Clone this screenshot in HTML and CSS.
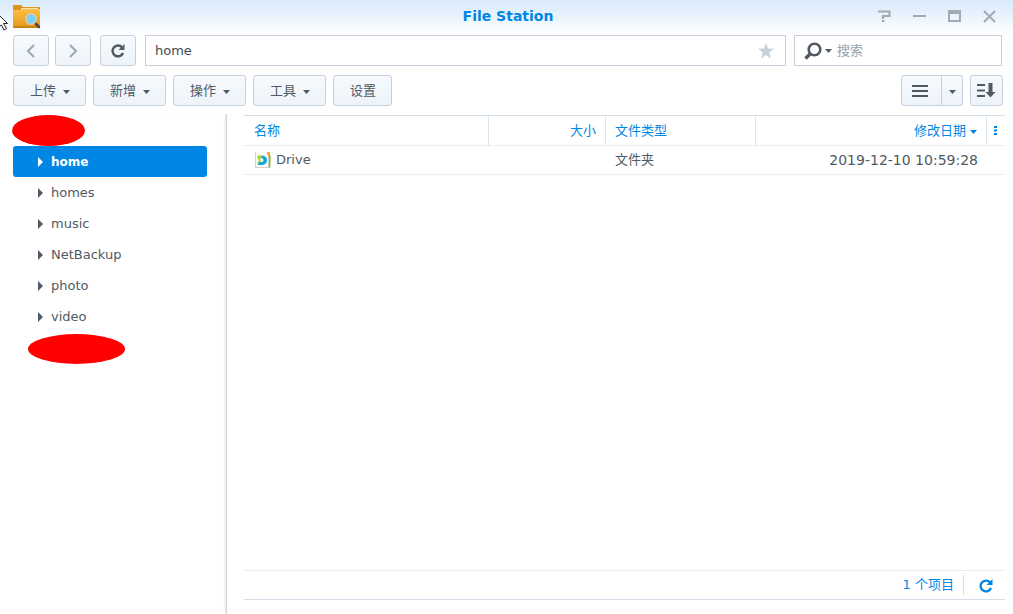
FILE: index.html
```html
<!DOCTYPE html>
<html lang="zh-CN">
<head>
<meta charset="utf-8">
<title>File Station</title>
<link rel="stylesheet" href="styles.css">
</head>
<body>
<div class="window">
  <header class="titlebar">
    <svg class="app-icon" width="28" height="24" viewBox="0 0 28 24" aria-hidden="true">
      <defs><linearGradient id="folder" x1="0" y1="0" x2="0" y2="1"><stop offset="0" stop-color="#ffc045"/><stop offset="1" stop-color="#e0981c"/></linearGradient></defs>
      <path d="M1 0h7l2 2h16q1 0 1 1v6H0V1q0-1 1-1z" fill="#dc961f"/>
      <path d="M8 3h17v2H8z" fill="#f4e3b8"/>
      <path d="M0 5h8l2-1h17v18q0 1-1 1H1q-1 0-1-1z" fill="url(#folder)"/>
      <path d="M0 21h27v1q0 1-1 1H1q-1 0-1-1z" fill="#c68213"/>
      <path d="M21.500 17.500l4.500 4.500" stroke="#50483d" stroke-width="2.500" stroke-linecap="round"/>
      <circle cx="18" cy="14" r="5.200" fill="#75d0fb" stroke="#d9cda8" stroke-width="1.500"/>
    </svg>
    <h1 class="title">File Station</h1>
    <div class="window-controls">
      <button class="control" aria-label="帮助"><svg width="14" height="14" viewBox="0 0 14 14"><path d="M0 2.500h11.500v4.500H5v3M4 12h2.500" fill="none" stroke="#a1abb5" stroke-width="2.200"/></svg></button>
      <button class="control" aria-label="最小化"><svg width="14" height="14" viewBox="0 0 14 14"><path d="M0 7h13" stroke="#a1abb5" stroke-width="2"/></svg></button>
      <button class="control" aria-label="最大化"><svg width="14" height="14" viewBox="0 0 14 14"><path d="M1 2h11v10H1zM1 4h11" fill="none" stroke="#a1abb5" stroke-width="2"/></svg></button>
      <button class="control" aria-label="关闭"><svg width="14" height="14" viewBox="0 0 14 14"><path d="M1 2l11 11M12 2L1 13" stroke="#a1abb5" stroke-width="2"/></svg></button>
    </div>
    <svg class="pointer" width="9" height="18" viewBox="0 0 9 18" aria-hidden="true"><path d="M-3 0L7.500 10.500H3.500l3 5-2.500 1.500-2.500-5L-3 15z" fill="#fff" stroke="#222"/></svg>
  </header>

  <div class="navbar">
    <button class="button square" aria-label="后退"><svg width="10" height="14" viewBox="0 0 10 14"><path d="M8 1L2 7l6 6" fill="none" stroke="#a1a9b3" stroke-width="2.200"/></svg></button>
    <button class="button square" aria-label="前进"><svg width="10" height="14" viewBox="0 0 10 14"><path d="M2 1l6 6-6 6" fill="none" stroke="#a1a9b3" stroke-width="2.200"/></svg></button>
    <button class="button square reload" aria-label="刷新"><svg width="14" height="14" viewBox="0 0 14 14"><path d="M11 3.300A5.400 5.400 0 1 0 12 9" fill="none" stroke="#505a64" stroke-width="2.500"/><path d="M13.500 0v6h-6z" fill="#505a64"/></svg></button>
    <div class="field path">
      <input class="input" type="text" value="home" aria-label="路径">
      <button class="control" aria-label="收藏"><svg width="16" height="16" viewBox="0 0 16 16"><path d="M8 0l2 5.500 6 .2-4.700 3.700L13 15.500 8 12l-5 3.500 1.700-6.100L0 5.700l6-.2z" fill="#c6d0dc"/></svg></button>
    </div>
    <div class="field search">
      <button class="control search-menu" aria-label="搜索选项">
        <svg width="18" height="18" viewBox="0 0 18 18"><circle cx="10.500" cy="7.500" r="5.800" fill="none" stroke="#505a64" stroke-width="2.600"/><path d="M6 12L1.500 16.500" stroke="#505a64" stroke-width="3.400"/></svg>
        <svg width="7" height="4" viewBox="0 0 7 4"><path d="M0 0h7L3.500 4z" fill="#505a64"/></svg>
      </button>
      <input class="input" type="text" placeholder="搜索" aria-label="搜索">
    </div>
  </div>

  <div class="toolbar">
    <button class="button">上传<svg class="caret" width="7" height="4" viewBox="0 0 7 4"><path d="M0 0h7L3.500 4z" fill="#505a64"/></svg></button>
    <button class="button">新增<svg class="caret" width="7" height="4" viewBox="0 0 7 4"><path d="M0 0h7L3.500 4z" fill="#505a64"/></svg></button>
    <button class="button">操作<svg class="caret" width="7" height="4" viewBox="0 0 7 4"><path d="M0 0h7L3.500 4z" fill="#505a64"/></svg></button>
    <button class="button">工具<svg class="caret" width="7" height="4" viewBox="0 0 7 4"><path d="M0 0h7L3.500 4z" fill="#505a64"/></svg></button>
    <button class="button">设置</button>
    <div class="view-group">
      <button class="button view" aria-label="列表视图"><svg width="16" height="12" viewBox="0 0 16 12"><path d="M0 1h16M0 6h16M0 11h16" stroke="#505a64" stroke-width="2"/></svg></button>
      <button class="button view-menu" aria-label="视图选项"><svg class="caret" width="7" height="4" viewBox="0 0 7 4"><path d="M0 0h7L3.500 4z" fill="#505a64"/></svg></button>
    </div>
    <button class="button sort" aria-label="排序"><svg width="20" height="16" viewBox="0 0 20 16"><path d="M1 2h8M1 7.500h8M1 13h8" stroke="#505a64" stroke-width="2"/><path d="M12.500 0h4v9h3l-5 5.500-5-5.500h3z" fill="#505a64"/></svg></button>
  </div>

  <div class="main">
    <nav class="sidebar">
      <svg class="mark" width="74" height="32" viewBox="0 0 74 32" aria-hidden="true"><ellipse cx="36.500" cy="16.500" rx="36.500" ry="15.500" fill="#f00"/></svg>
      <ul class="tree">
        <li><a class="node selected" href="#"><svg width="6" height="10" viewBox="0 0 6 10"><path d="M1 0l5 5-5 5z" fill="currentColor"/></svg>home</a></li>
        <li><a class="node" href="#"><svg width="6" height="10" viewBox="0 0 6 10"><path d="M1 0l5 5-5 5z" fill="currentColor"/></svg>homes</a></li>
        <li><a class="node" href="#"><svg width="6" height="10" viewBox="0 0 6 10"><path d="M1 0l5 5-5 5z" fill="currentColor"/></svg>music</a></li>
        <li><a class="node" href="#"><svg width="6" height="10" viewBox="0 0 6 10"><path d="M1 0l5 5-5 5z" fill="currentColor"/></svg>NetBackup</a></li>
        <li><a class="node" href="#"><svg width="6" height="10" viewBox="0 0 6 10"><path d="M1 0l5 5-5 5z" fill="currentColor"/></svg>photo</a></li>
        <li><a class="node" href="#"><svg width="6" height="10" viewBox="0 0 6 10"><path d="M1 0l5 5-5 5z" fill="currentColor"/></svg>video</a></li>
      </ul>
      <svg class="mark lower" width="98" height="31" viewBox="0 0 98 31" aria-hidden="true"><ellipse cx="48.500" cy="15" rx="48.500" ry="15" fill="#f00"/></svg>
    </nav>

    <section class="content">
      <table class="files">
        <colgroup><col class="col-name"><col class="col-size"><col class="col-type"><col class="col-date"><col class="col-more"></colgroup>
        <thead>
          <tr>
            <th>名称</th>
            <th class="right">大小</th>
            <th>文件类型</th>
            <th class="right">修改日期<svg class="sort-mark" width="7" height="4" viewBox="0 0 7 4"><path d="M0 0h7L3.500 4z" fill="#0086e5"/></svg></th>
            <th class="more"><button class="control" aria-label="列选项"><svg width="3" height="9" viewBox="0 0 3 9"><path d="M0 0h3v2H0zM0 3.500h3v2H0zM0 7h3v2H0z" fill="#0086e5"/></svg></button></th>
          </tr>
        </thead>
        <tbody>
          <tr>
            <td><span class="file"><svg width="18" height="18" viewBox="0 0 18 18" aria-hidden="true"><path d="M1 1h13v16H1z" fill="#fbfbfb"/><path d="M1.500 1v15.500H14" fill="none" stroke="#cfd1d3"/><path d="M13 1h3v4l-1 1-2-3z" fill="#f6ae35"/><path d="M16 4v11l-1 2V6z" fill="#7fa05a" stroke="#8fae5d"/><path d="M3.500 4.500H8L6.800 7.500H5.500L7 9.500 4.500 12l-1 1V11L5 9.500 3.500 7.500z" fill="#a8d916"/><path d="M8 4.500q5 .5 5 4.700T8 14H3.500l1.700-3H8q1.500-.3 1.500-1.800T8 7.300H6.800z" fill="#12a7dc"/></svg>Drive</span></td>
            <td></td>
            <td>文件夹</td>
            <td class="right date" colspan="2">2019-12-10 10:59:28</td>
          </tr>
        </tbody>
      </table>
      <footer class="status">
        <span class="count">1 个项目</span>
        <button class="control refresh" aria-label="刷新列表"><svg width="14" height="14" viewBox="0 0 14 14"><path d="M11 3.300A5.400 5.400 0 1 0 12 9" fill="none" stroke="#0086e5" stroke-width="2.300"/><path d="M13.500 0v6h-6z" fill="#0086e5"/></svg></button>
      </footer>
    </section>
  </div>
</div>
</body>
</html>
```

FILE: styles.css
```css
* { box-sizing: border-box; }

body {
  margin: 0;
  background: #fff;
  color: #505a64;
  font-family: "DejaVu Sans", "Noto Sans CJK SC", sans-serif;
  font-size: 13px;
  line-height: 20px;
}

svg { display: block; flex: none; }

button, input { font: inherit; color: inherit; }

.window {
  display: flex;
  flex-direction: column;
  min-height: 100vh;
  background: linear-gradient(#d7eafa, #fff 35px);
}

.titlebar {
  position: relative;
  display: grid;
  grid-template-columns: 1fr auto 1fr;
  align-items: center;
  height: 35px;
  padding: 0 16px 3px 13px;
}

.app-icon { margin-top: 2px; }

.title {
  margin: 0;
  padding-left: 6px;
  color: #0086e5;
  font-size: 14px;
  font-weight: bold;
}

.window-controls {
  display: flex;
  justify-content: flex-end;
  gap: 21px;
}

.control {
  display: flex;
  align-items: center;
  justify-content: center;
  padding: 0;
  border: 0;
  background: none;
}

.pointer {
  position: absolute;
  top: 13px;
  left: 0;
}

.navbar {
  display: flex;
  gap: 6px;
  padding: 0 11px 0 13px;
}

.button {
  display: flex;
  align-items: center;
  justify-content: center;
  gap: 7px;
  height: 31px;
  padding: 0 15px 0 16px;
  border: 1px solid #c6d0dc;
  border-radius: 3px;
  background: linear-gradient(#f6fafe, #edf3f9);
}

.caret { margin-top: 3px; }

.square {
  width: 36px;
  padding: 0;
}

.reload { margin-left: 3px; }

.field {
  display: flex;
  align-items: center;
  height: 31px;
  padding: 0 11px 0 9px;
  border: 1px solid #c6d0dc;
  background: #fff;
}

.path {
  flex: 1;
  margin-left: 3px;
}

.search {
  gap: 5px;
  width: 208px;
  margin-left: 2px;
}

.search-menu { gap: 3px; }

.input {
  flex: 1;
  min-width: 0;
  padding: 0;
  border: 0;
  outline: 0;
  background: none;
  color: #414b55;
}

.input::placeholder {
  color: #98a2ad;
  opacity: 1;
}

.toolbar {
  display: flex;
  gap: 7px;
  padding: 9px 10px 8px 13px;
}

.view-group {
  display: flex;
  margin-left: auto;
}

.view {
  width: 41px;
  padding: 0 3px 0 0;
  border-radius: 3px 0 0 3px;
}

.view-menu {
  width: 21px;
  padding: 0;
  border-left: 0;
  border-radius: 0 3px 3px 0;
}

.sort {
  width: 33px;
  padding: 0 1px 0 0;
}

.main {
  display: flex;
  flex: 1;
}

.sidebar {
  width: 227px;
  padding: 0 19px 0 13px;
  border-right: 1px solid #d4d6d8;
  box-shadow: inset -2px 0 2px -1px #e6e6e6;
}

.mark { margin-left: -1px; }

.lower { margin: 2px 0 0 15px; }

.tree {
  margin: 0;
  padding: 0;
  list-style: none;
}

.node {
  display: flex;
  align-items: center;
  gap: 8px;
  height: 31px;
  padding-left: 24px;
  border-radius: 3px;
  color: #505a64;
  text-decoration: none;
}

.selected {
  background: #0086e5;
  color: #fff;
  font-size: 12px;
  font-weight: bold;
}

.content {
  display: flex;
  flex: 1;
  flex-direction: column;
  justify-content: space-between;
  min-width: 0;
  padding: 1px 8px 14px 17px;
}

.files {
  width: 100%;
  border-collapse: separate;
  border-spacing: 0;
  border-top: 1px solid #d4dfea;
  table-layout: fixed;
}

.col-name { width: 245px; }
.col-size { width: 117px; }
.col-type { width: 150px; }
.col-more { width: 18px; }

.files th,
.files td {
  padding: 0 9px;
  border-bottom: 1px solid #e8eef4;
  text-align: left;
}

.files th:first-child,
.files td:first-child { padding-left: 10px; }

.files th {
  height: 30px;
  border-right: 1px solid #d9e5ef;
  color: #0086e5;
  font-weight: normal;
}

.files td { height: 29px; }

.files .right { text-align: right; }

.files .date {
  padding-right: 27px;
  font-size: 14px;
}

.files .more {
  padding: 0 7px;
  border-right: 0;
}

.sort-mark {
  display: inline-block;
  margin-left: 4px;
  vertical-align: 1px;
}

.file {
  display: flex;
  align-items: center;
  gap: 4px;
}

.status {
  display: flex;
  align-items: center;
  justify-content: flex-end;
  height: 30px;
  border-top: 1px solid #e8eef4;
  border-bottom: 1px solid #d4dfea;
  color: #0086e5;
}

.count {
  padding-right: 9px;
  border-right: 1px solid #d4dfea;
}

.refresh { padding: 2px 12px 0 15px; }
```
